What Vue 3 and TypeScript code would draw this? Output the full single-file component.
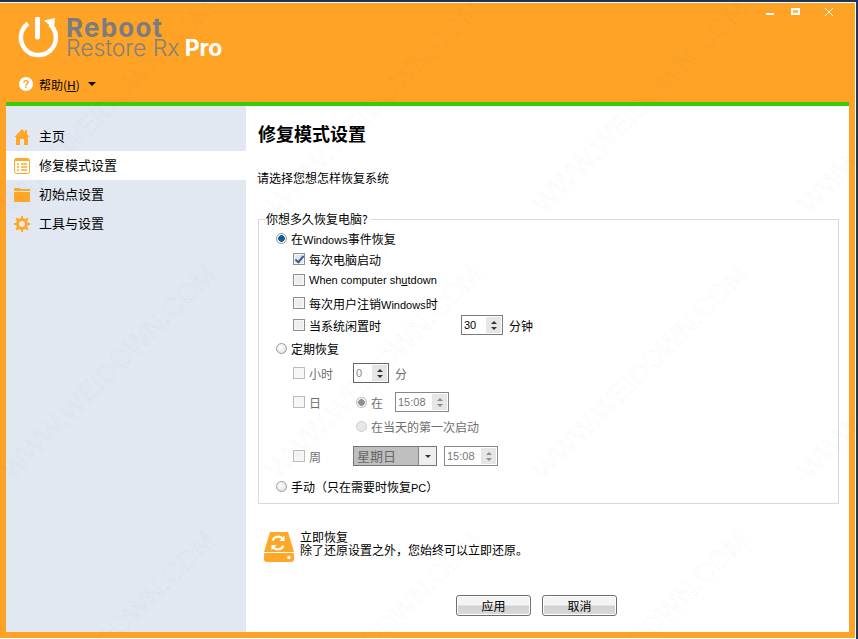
<template>
  <div class="window">
    <div class="frame">
      <header class="top">
        <div class="logo">
          <svg width="40" height="41" viewBox="0 0 40 41">
            <path d="M10 6.5 A17.5 17.5 0 1 0 32 7.5" fill="none" stroke="#fff" stroke-width="4.5" />
            <path d="M26 3.5 L37 1 L36 12 Z" fill="#fff" />
            <path d="M19.5 2 V20" stroke="#fff" stroke-width="5" stroke-linecap="round" />
          </svg>
          <div class="logo-text">
            <div class="logo-a">Reboot</div>
            <div class="logo-b">Restore Rx <b>Pro</b></div>
          </div>
        </div>
        <div class="help">
          <span class="help-ico">?</span>
          <span>帮助(<u>H</u>)</span>
          <i class="caret"></i>
        </div>
        <div class="win-btns">
          <i class="min"></i>
          <i class="max"></i>
          <svg width="8" height="8" viewBox="0 0 8 8"><path d="M0 0 L8 8 M8 0 L0 8" stroke="#fff" stroke-width="1" /></svg>
        </div>
      </header>
      <div class="green"></div>
      <div class="body">
        <aside class="side">
          <div v-for="item in menu" :key="item.label" class="nav" :class="{ active: item.active }">
            <svg width="16" height="16" viewBox="0 0 16 16" v-html="item.icon"></svg>
            <span>{{ item.label }}</span>
          </div>
        </aside>
        <main class="main">
          <h1>修复模式设置</h1>
          <p class="sub">请选择您想怎样恢复系统</p>
          <fieldset class="box">
            <legend>你想多久恢复电脑?</legend>
            <div class="rows">
              <div class="row"><i class="radio on"></i><span>在<span class="en">Windows</span>事件恢复</span></div>
              <div class="row chk"><i class="check on"></i><span>每次电脑启动</span></div>
              <div class="row chk"><i class="check"></i><span class="en">When computer sh<u>u</u>tdown</span></div>
              <div class="row chk"><i class="check"></i><span>每次用户注销<span class="en">Windows</span>时</span></div>
              <div class="row chk">
                <i class="check"></i><span class="w-idle">当系统闲置时</span>
                <div class="spin"><span>30</span><b class="arrows"><em class="up"></em><em class="dn"></em></b></div>
                <span>分钟</span>
              </div>
              <div class="row"><i class="radio"></i><span>定期恢复</span></div>
              <div class="row chk off">
                <i class="check"></i><span class="w-hour">小时</span>
                <div class="spin small"><span>0</span><b class="arrows"><em class="up"></em><em class="dn"></em></b></div>
                <span>分</span>
              </div>
              <div class="row chk off">
                <i class="check"></i><span class="w-day">日</span>
                <i class="radio dim"></i><span class="w-at">在</span>
                <div class="spin time"><span>15:08</span><b class="arrows"><em class="up"></em><em class="dn"></em></b></div>
              </div>
              <div class="row off first-boot"><i class="radio blank"></i><span>在当天的第一次启动</span></div>
              <div class="row chk off">
                <i class="check"></i><span class="w-hour">周</span>
                <div class="combo"><span>星期日</span><b><em class="dn"></em></b></div>
                <div class="spin time"><span>15:08</span><b class="arrows"><em class="up"></em><em class="dn"></em></b></div>
              </div>
              <div class="row"><i class="radio"></i><span>手动（只在需要时恢复<span class="en">PC</span>）</span></div>
            </div>
          </fieldset>
          <div class="now">
            <svg width="30" height="30" viewBox="0 0 30 30">
              <path d="M6 0 H24 L30 20 H0 Z" fill="#ffa726" />
              <rect x="0" y="20" width="30" height="10" rx="3" fill="#ffa726" />
              <path d="M0 20.5 H30" stroke="#fff" stroke-width="1" />
              <circle cx="25" cy="25.5" r="1.7" fill="#fff" />
              <path d="M8.6 8.5 A6 6 0 0 1 18.5 6.5 M19.4 13.5 A6 6 0 0 1 9.5 15.5" fill="none" stroke="#fff" stroke-width="2.2" />
              <path d="M20.5 3.5 V9 H15.5 Z M7.5 18.5 V13 H12.5 Z" fill="#fff" />
            </svg>
            <div class="now-text">
              <div>立即恢复</div>
              <div>除了还原设置之外，您始终可以立即还原。</div>
            </div>
          </div>
          <div class="actions">
            <button>应用</button>
            <button>取消</button>
          </div>
        </main>
      </div>
    </div>
    <div class="marks">
      <span v-for="(m, i) in marks" :key="i" class="mark" :style="{ left: m[0] - 150 + 'px', top: m[1] - 16 + 'px' }">WWW.WEIDOWN.COM</span>
    </div>
  </div>
</template>

<script setup lang="ts">
const home = '<path d="M8 0 L11 3 V1 H13 V5 L15.5 8 H14 V16 H10 V10 H6 V16 H2 V8 H0.5 Z" fill="#ffa726"/>'
const list = '<rect x="0.5" y="0.5" width="15" height="15" rx="2" fill="#fff" stroke="#ffa726"/><path d="M1 1 H15 V3 H1 Z" fill="#ffa726"/><path d="M3 6 H5 M7 6 H13 M3 9 H5 M7 9 H13 M3 12 H5 M7 12 H13" stroke="#ffa726" stroke-width="1.4"/>'
const folder = '<path d="M0 1 H6 L7 2 H16 V4 H0 Z M0 5 H16 V15 H0 Z" fill="#ffa726"/>'
const gear = '<path d="M7 0 H9 V2 L11 3 L13 1.5 L14.5 3 L13 5 L14 7 H16 V9 H14 L13 11 L14.5 13 L13 14.5 L11 13 L9 14 V16 H7 V14 L5 13 L3 14.5 L1.5 13 L3 11 L2 9 H0 V7 H2 L3 5 L1.5 3 L3 1.5 L5 3 L7 2 Z" fill="#ffa726"/><circle cx="8" cy="8" r="3" fill="#e1e8f2"/>'

const menu = [
  { label: '主页', icon: home, active: false },
  { label: '修复模式设置', icon: list, active: true },
  { label: '初始点设置', icon: folder, active: false },
  { label: '工具与设置', icon: gear, active: false },
]

// watermark repeats every 266px
const marks: number[][] = []
for (const y of [106, 372, 638]) {
  for (const x of [108, 374, 640, 906]) {
    marks.push([x, y])
  }
}
</script>

<style>
html, body { margin: 0; overflow: hidden; }
</style>

<style scoped>
.window {
  position: relative;
  width: 858px;
  height: 639px;
  box-sizing: border-box;
  overflow: hidden;
  padding: 2px 2px 0 0;
  background: #1d3557;
  font-family: "Noto Sans CJK SC", "Liberation Sans", sans-serif;
  font-size: 12px;
  color: #000;
}
.frame {
  height: 100%;
  box-sizing: border-box;
  background: #ffa326;
  border: solid #fff;
  border-width: 1px 1px 1px 0;
  padding: 0 6px 6px;
  display: flex;
  flex-direction: column;
}
.marks { position: absolute; inset: 0; pointer-events: none; }
.mark {
  position: absolute;
  width: 300px;
  text-align: center;
  transform: rotate(-45deg);
  font: 27px/32px "Liberation Sans", sans-serif;
  color: transparent;
  -webkit-text-stroke: 1px rgba(0, 0, 0, 0.038);
  white-space: nowrap;
}
.top { position: relative; height: 99px; flex: none; }
.logo { display: flex; align-items: flex-start; gap: 8px; padding: 14px 0 0 12px; }
.logo-text { font-family: Inter, sans-serif; }
.logo-a { font-size: 26px; font-weight: 700; color: #7a7c80; line-height: 21px; letter-spacing: 1.2px; }
.logo-b { font-size: 23px; font-weight: 300; color: #84817c; line-height: 21px; letter-spacing: -0.1px; white-space: nowrap; }
.logo-b b { color: #fff; font-weight: 700; font-size: 23px; margin-left: -1px; }
.help { display: flex; align-items: center; gap: 6px; margin: 18px 0 0 13px; height: 14px; }
.help-ico {
  width: 14px; height: 14px; border-radius: 50%; background: #fff;
  font: bold 11px/14px "Liberation Sans", sans-serif; color: #ffa326; text-align: center;
}
.caret { border: 4px solid transparent; border-top: 4px solid #000; border-bottom: 0; margin-left: 2px; }
.win-btns { position: absolute; top: 5px; right: 16px; display: flex; align-items: flex-start; }
.min { width: 8px; height: 2px; background: #fff; margin: 5px 17px 0 0; }
.max { width: 5px; height: 3px; border: 2px solid #fff; background: #ffb860; margin-right: 25px; }
.green { height: 4px; flex: none; background: #3ccc05; }
.body { flex: 1; min-height: 0; display: flex; background: #fff; }
.side { width: 240px; flex: none; background: #e1e8f2; padding-top: 16px; }
.nav { display: flex; align-items: center; height: 29px; padding-left: 8px; gap: 9px; font-size: 13px; }
.nav span { margin-top: -2px; }
.nav.active { background: #fff; }
.main { flex: 1; min-width: 0; padding: 0 10px 0 12px; display: flex; flex-direction: column; }
h1 { margin: 14px 0 0; font-size: 18px; font-weight: 700; line-height: 26px; }
.sub { margin: 23px 0 0 -1px; line-height: 18px; }
.box { margin: 25px 0 0; padding: 0 0 0 17px; border: 1px solid #d9d9d9; height: 292px; box-sizing: border-box; min-width: 0; }
legend { padding: 0 2px 0 0; margin-left: -10px; font-size: 12px; line-height: 14px; }
.rows { display: grid; grid-template-rows: 24px 18px 24px 22px 22px 24px 26px 32px 16px 44px 16px; }
.row { display: flex; align-items: center; gap: 4px; white-space: nowrap; }
.chk { padding-left: 17px; }
.en { font: 11px "Liberation Sans", sans-serif; }
.w-idle { width: 148px; }
.w-hour { width: 40px; }
.w-day { width: 43px; }
.w-at { width: 12px; margin-right: 8px; }
.first-boot { padding-left: 80px; }
.off { color: #6e6e6e; }
.radio {
  width: 11px; height: 11px; border-radius: 50%; box-sizing: border-box;
  border: 1px solid #9a9a9a; background: radial-gradient(circle at 40% 35%, #fff, #dcdcdc);
  flex: none;
}
.radio.on { background: radial-gradient(circle, #0e5f96 0 3px, #f3f3f3 3.6px); }
.radio.dim { background: radial-gradient(circle, #8f8f8f 0 3px, #f3f3f3 3.6px); border-color: #bbb; }
.radio.blank { border-color: #ccc; background: #e8e8e8; }
.check {
  width: 12px; height: 12px; box-sizing: border-box; border: 1px solid #8e8f8f;
  background: #eee; box-shadow: inset 0 0 0 1px #f7f7f7; flex: none; position: relative;
}
.off .check { border-color: #bbb; background: #f6f6f6; }
.check.on { background: #dfe6f2; }
.check.on::after {
  content: ""; position: absolute; left: 3px; top: 0; width: 3px; height: 7px;
  border: solid #3d5a9a; border-width: 0 2px 2px 0; transform: rotate(40deg);
}
.spin {
  display: flex; align-items: stretch; flex: none; width: 42px; height: 20px; margin-right: 2px;
  box-sizing: border-box; border: 1px solid #7a7a7a; background: #fff; font: 11px/18px "Liberation Sans", sans-serif;
  color: #000;
}
.spin > span { flex: 1; padding-left: 2px; }
.small { width: 36px; border-color: #666; color: #888; }
.time { width: 54px; border-color: #888; color: #777; margin-right: 0; }
.arrows, .combo b {
  width: 15px; display: flex; flex-direction: column; align-items: center; justify-content: center; gap: 3px;
  background: #e6e6e6; margin: 1px;
}
.arrows { background: linear-gradient(#e6e6e6 0 47%, #a8a8a8 47% 53%, #e6e6e6 53%); }
.up, .dn { display: block; border: 3px solid transparent; }
.up { border-top: 0; border-bottom: 3px solid #333; }
.dn { border-bottom: 0; border-top: 3px solid #333; }
.time .up, .time .dn { opacity: 0.5; }
.combo {
  display: flex; flex: none; width: 84px; height: 20px; box-sizing: border-box; border: 1px solid #777; background: #bfbfbf;
  margin-right: 3px;
}
.combo span { flex: 1; padding-left: 3px; line-height: 18px; font-size: 13px; color: #666; }
.combo b { width: 17px; background: #eee; margin: 0; border-left: 1px solid #888; }
.now { display: flex; align-items: flex-start; gap: 6px; margin: 28px 0 0 6px; }
.now-text { line-height: 13px; margin-top: -2px; }
.actions { display: flex; justify-content: flex-end; gap: 11px; margin: 33px 222px 0 0; }
button {
  width: 75px; height: 21px; padding: 0; border: 1px solid #6f6f6f; border-radius: 3px;
  background: linear-gradient(#f4f4f4 0 45%, #d2d2d2 55%, #dadada);
  box-shadow: inset 0 0 0 1px #fff;
  font: 12px "Noto Sans CJK SC", sans-serif; color: #000;
}
</style>
